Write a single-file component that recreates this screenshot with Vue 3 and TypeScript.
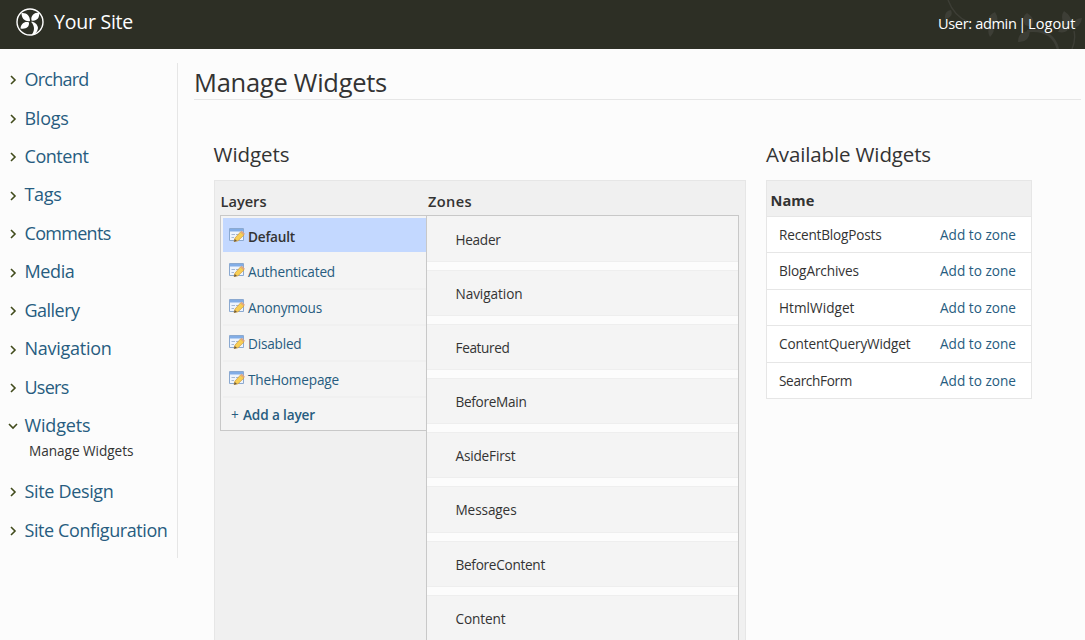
<script setup lang="ts">
interface NavItem { label: string; w: number; open?: boolean }
interface Entry { label: string; w: number }

const nav: NavItem[] = [
  { label: 'Orchard', w: 64 }, { label: 'Blogs', w: 44 }, { label: 'Content', w: 64 },
  { label: 'Tags', w: 37 }, { label: 'Comments', w: 86 }, { label: 'Media', w: 50 },
  { label: 'Gallery', w: 55 }, { label: 'Navigation', w: 87 }, { label: 'Users', w: 44 },
  { label: 'Widgets', w: 66, open: true }, { label: 'Site Design', w: 89 },
  { label: 'Site Configuration', w: 143 },
]
const layers: Entry[] = [
  { label: 'Default', w: 47 }, { label: 'Authenticated', w: 87 }, { label: 'Anonymous', w: 74 },
  { label: 'Disabled', w: 53.5 }, { label: 'TheHomepage', w: 91 },
]
const zones: Entry[] = [
  { label: 'Header', w: 45 }, { label: 'Navigation', w: 67 }, { label: 'Featured', w: 54 },
  { label: 'BeforeMain', w: 71 }, { label: 'AsideFirst', w: 60 }, { label: 'Messages', w: 61 },
  { label: 'BeforeContent', w: 89.5 }, { label: 'Content', w: 50 },
]
const available: Entry[] = [
  { label: 'RecentBlogPosts', w: 102.5 }, { label: 'BlogArchives', w: 80 }, { label: 'HtmlWidget', w: 75.5 },
  { label: 'ContentQueryWidget', w: 131.5 }, { label: 'SearchForm', w: 73 },
]

const ctx = document.createElement('canvas').getContext('2d')!
function fit(label: string, width: number, size: number, weight = 400) {
  ctx.font = `${weight} ${size}px "Open Sans"`
  const spacing = (width - ctx.measureText(label).width) / label.length
  return { letterSpacing: `${spacing.toFixed(3)}px` }
}
</script>

<template>
  <div class="page">
    <header class="top">
      <svg class="logo" width="28" height="28" viewBox="0 0 28 28">
        <circle cx="14" cy="14" r="13" fill="none" stroke="#fff" stroke-width="1.4" />
        <path fill="#fff" d="M14 13C9 14 5.500 10.500 5.500 5C11 4.500 14 8 14 13ZM15.500 12.500C14.500 8 18 4.500 23 4.500C24 10 20.500 13.500 15.500 12.500ZM13 14.500C13.500 19 10 21.500 4.500 20.500C5 16 8.500 13 13 14.500ZM15 13.800C18 13.500 21.500 16 22 20C21.500 23 20 25.500 18 26.800L15 27.500C18.500 24 19.500 18.500 15 13.800Z" />
      </svg>
      <span class="site" :style="fit('Your Site', 79, 19.5)">Your Site</span>
      <svg class="vine" width="145" height="49" viewBox="0 0 145 49">
        <g fill="none" stroke="#3d3e36" stroke-width="1.400">
          <path d="M8 0Q14 16 28 22" />
          <path d="M87 31Q112 28 118 49" stroke-width="2.500" />
          <path d="M134 31Q136 40 132 49" />
        </g>
        <g fill="#3d3e36">
          <path d="M5 19Q4 11 11 10Q14 17 5 19ZM48 22Q48 15 55 12Q60 20 55 24ZM50 37Q46 30 51 25Q57 30 50 37ZM78 42Q78 31 90 31Q89 43 78 42ZM85 25Q81 17 87 13Q97 19 91 27ZM118 32Q122 23 129 27Q128 34 118 32ZM124 25Q120 16 124 11Q133 17 131 25ZM131 28Q133 18 142 18Q141 28 131 28Z" />
        </g>
      </svg>
      <div class="user">
        <span :style="fit('User: admin', 78.5, 14.6)">User: admin</span>
        <span class="bar">|</span>
        <span :style="fit('Logout', 47.5, 14.6)">Logout</span>
      </div>
    </header>

    <div class="body">
      <nav class="side">
        <template v-for="item in nav" :key="item.label">
          <div class="item">
            <svg class="chev" width="10" height="10" viewBox="0 0 10 10">
              <path :d="item.open ? 'M1 3L5 7L9 3' : 'M3 1L7 5L3 9'" fill="none" stroke="#414b1c" stroke-width="1.600" />
            </svg>
            <a :style="fit(item.label, item.w, 18)">{{ item.label }}</a>
          </div>
          <div v-if="item.open" class="sub" :style="fit('Manage Widgets', 104.5, 13.6)">Manage Widgets</div>
        </template>
      </nav>

      <main class="main">
        <h1 :style="fit('Manage Widgets', 193, 25.5)">Manage Widgets</h1>
        <div class="columns">
          <section class="widgets">
            <h2 :style="fit('Widgets', 76, 20.5)">Widgets</h2>
            <div class="panel">
              <div class="layers">
                <h3 :style="fit('Layers', 46, 14.6, 600)">Layers</h3>
                <div class="layer-list">
                  <div v-for="(l, i) in layers" :key="l.label" class="layer" :class="{ active: i === 0 }">
                    <svg class="form" width="16" height="16" viewBox="0 0 16 16">
                      <path d="M.5 1.500H14.500V13.500H.5Z" fill="#eef4fd" stroke="#8ba9d0" />
                      <path d="M1 2H14V4.500H1Z" fill="#82ade6" />
                      <path d="M2.500 7.500H6M2.500 10.500H5M7 7.500H12M7 10.500H10" stroke="#a5b7d2" />
                      <path d="M5 14.500L6 11L11.500 5L15 8L9 13.800Z" fill="#f8cf55" stroke="#cf9a3e" stroke-width=".7" />
                      <path d="M11.500 5L12.700 3.800L15.900 6.800L15 8Z" fill="#e3a57c" />
                      <path d="M5 14.700L5.800 12L8 13.900Z" fill="#66563f" />
                    </svg>
                    <span :style="fit(l.label, l.w, 13.6, i === 0 ? 600 : 400)">{{ l.label }}</span>
                  </div>
                  <div class="add"><b>+</b><span :style="fit('Add a layer', 72, 13.6, 600)">Add a layer</span></div>
                </div>
              </div>
              <div class="zones">
                <h3 :style="fit('Zones', 44, 14.6, 600)">Zones</h3>
                <div class="zone-list">
                  <div v-for="z in zones" :key="z.label" class="zone">
                    <span :style="fit(z.label, z.w, 13.6)">{{ z.label }}</span>
                  </div>
                </div>
              </div>
            </div>
          </section>

          <section class="available">
            <h2 :style="fit('Available Widgets', 165, 20.5)">Available Widgets</h2>
            <div class="table">
              <div class="head" :style="fit('Name', 44, 14.6, 700)">Name</div>
              <div v-for="a in available" :key="a.label" class="row">
                <span :style="fit(a.label, a.w, 13.6)">{{ a.label }}</span>
                <a :style="fit('Add to zone', 76, 13.6)">Add to zone</a>
              </div>
            </div>
          </section>
        </div>
      </main>
    </div>
  </div>
</template>

<style>
body { background: #fcfcfc; overflow: hidden; }
</style>
<style scoped>
* { box-sizing: border-box; }
.page { width: 1085px; height: 640px; overflow: hidden; background: #fcfcfc; color: #333; font-family: "Open Sans", "Noto Sans", sans-serif; white-space: nowrap; }
.top { position: relative; height: 49px; background: #2d2f25; display: flex; align-items: flex-start; padding-left: 16px; color: #fff; }
.logo { margin-top: 8px; flex: none; }
.site { margin-left: 10px; font-size: 19.5px; line-height: 44px; }
.vine { position: absolute; right: 0; top: 0; }
.user { position: relative; display: flex; margin-left: auto; margin-right: 9.5px; font-size: 14.6px; line-height: 46px; }
.bar { width: 11.5px; text-align: center; }
.body { display: flex; height: 591px; }
.side { width: 178px; height: 495px; flex: none; margin-top: 14px; border-right: 1px solid #e6e6e6; padding-left: 8px; }
.item { display: flex; align-items: center; height: 38.47px; gap: 6.5px; font-size: 18px; line-height: 24px; padding-bottom: 6.4px; }
.chev { flex: none; margin-top: 2.4px; }
.item a { color: #275c80; }
.sub { height: 28px; margin-left: 21px; margin-top: -7px; padding-bottom: 2px; font-size: 13.6px; line-height: 20px; margin-bottom: 6.5px; }
.main { flex: 1; padding: 14px 4px 0 16px; }
h1 { margin: 0; height: 37px; border-bottom: 1px solid #e6e6e6; font-size: 25.5px; line-height: 39px; font-weight: 400; }
.columns { display: flex; gap: 20px; padding: 40px 0 0 20px; }
h2 { margin: 0; height: 40px; font-size: 20.5px; line-height: 28px; font-weight: 400; }
h3 { margin: 0; height: 34px; font-size: 14.6px; line-height: 41px; font-weight: 600; }
.widgets { width: 532px; }
.widgets h2 { margin-left: -0.5px; }
.panel { display: flex; height: 520px; background: #f0f0f0; border: 1px solid #e6e6e6; padding-left: 5px; }
.layers { width: 206px; }
.layers h3 { padding-left: 0.5px; }
.zones { width: 313px; }
.zones h3 { padding-left: 2px; }
.layer-list { border: 1px solid #c8c8c8; border-right: 0; background: #f4f4f4; padding: 2px 0 0 2px; height: 216px; }
.layer { display: flex; align-items: center; height: 36px; padding-left: 6px; gap: 3px; border-bottom: 2px solid #f0f0f0; color: #275c80; font-size: 13.6px; }
.layer.active { height: 34px; background: #c3d8ff; color: #333; font-weight: 600; border-bottom: 0; padding-top: 2px; margin-bottom: 2px; }
.form { flex: none; margin-top: -3px; }
.layer span { line-height: 20px; padding-top: 1px; }
.add { display: flex; font-size: 13.6px; font-weight: 600; line-height: 34px; padding-left: 8px; color: #275c80; }
.add b { width: 12px; font-weight: 400; }
.zone-list { border: 1px solid #c8c8c8; height: 500px; background: #fcfcfc; }
.zone { height: 46.100px; margin-bottom: 8px; background: #f4f4f4; border: solid #eee; border-width: 1px 0; padding-left: 28.5px; font-size: 13.6px; line-height: 45.7px; }
.zone:first-child { border-top: 0; line-height: 47px; }
.available { width: 266px; }
.table { border: 1px solid #e6e6e6; background: #fff; }
.head { height: 35px; background: #f0f0f0; padding-left: 3.5px; font-size: 14.6px; font-weight: 700; line-height: 39px; }
.row { display: flex; justify-content: space-between; height: 36.400px; border-top: 1px solid #e6e6e6; padding: 0 15px 0 12px; font-size: 13.6px; line-height: 36px; }
.row a { color: #275c80; }
</style>
